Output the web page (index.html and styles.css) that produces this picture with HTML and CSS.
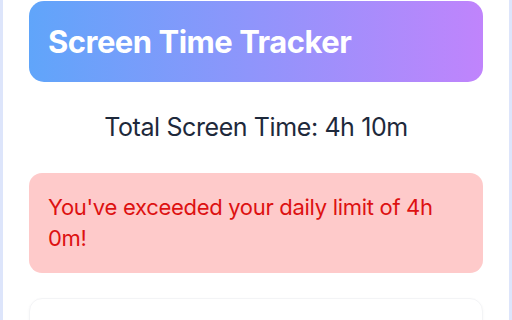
FILE: index.html
```html
<!DOCTYPE html>
<html>
<head>
  <link rel="stylesheet" href="styles.css">
</head>
<body>
  <div class="container">
    <!-- Header -->
    <div class="header">
      <h1>Screen Time Tracker</h1>
    </div>

    <div class="total">Total Screen Time: <span id="total">4h 10m</span></div>

    <div class="alert">You've exceeded your daily limit of 4h 0m!</div>

    <div class="card"></div>
  </div>
</body>
</html>
```

FILE: styles.css
```css
* {
  margin: 0;
  padding: 0;
  box-sizing: border-box;
}

body {
  background: #dde5fb;
  font-family: Inter, "Noto Sans", sans-serif;
  height: 320px;
  overflow: hidden;
}

.container {
  margin: 0 3px;
  min-height: 320px;
  background: #fff;
  padding: 1px 26px 0;
}

/* Header */
.header {
  background: linear-gradient(90deg, #60a5fa, #c084fc);
  border-radius: 15px;
  padding: 20px 19px;
}

.header h1 {
  color: #fff;
  font-size: 31px;
  letter-spacing: -0.5px;
  line-height: 41px;
  font-weight: 700;
}

.total {
  margin: 27px 0 26px;
  text-align: center;
  font-size: 25px;
  letter-spacing: -0.4px;
  line-height: 37.5px;
  color: #1e293b;
}

.alert {
  background: #fecaca;
  color: #dd1111;
  border-radius: 13px;
  padding: 19px 19px 18px;
  font-size: 22px;
  letter-spacing: -0.3px;
  line-height: 31.5px;
}

.card {
  margin-top: 25px;
  height: 120px;
  border: 1px solid #f3f4f6;
  border-radius: 13px;
  box-shadow: 0 1px 3px rgba(0, 0, 0, 0.04);
}
```
